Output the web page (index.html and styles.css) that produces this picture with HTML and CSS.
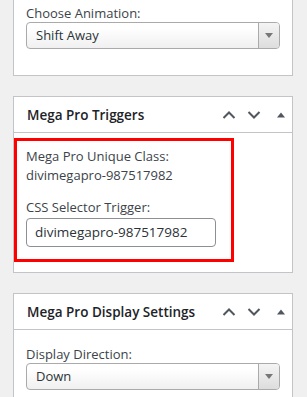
FILE: index.html
```html
<!DOCTYPE html>
<html>
<head>
    <meta charset="utf-8">
    <title>Mega Pro</title>
    <link rel="stylesheet" href="styles.css">
</head>
<body>
    <div class="sidebar">
        <div class="postbox cut">
            <div class="inside">
                <label class="field-label">Choose Animation:</label>
                <div class="select">
                    <span class="select-text">Shift Away</span>
                    <span class="select-arrow"><i></i></span>
                </div>
            </div>
        </div>

        <div class="postbox">
            <div class="postbox-header">
                <h2>Mega Pro Triggers</h2>
                <div class="handle-actions">
                    <svg width="14" height="10" viewBox="0 0 14 10"><path d="M1.5 8 L7 2.5 L12.5 8" fill="none" stroke="#50575e" stroke-width="2"/></svg>
                    <svg width="14" height="10" viewBox="0 0 14 10"><path d="M1.5 2 L7 7.5 L12.5 2" fill="none" stroke="#50575e" stroke-width="2"/></svg>
                    <svg class="toggle" width="10" height="10" viewBox="0 0 10 10"><path d="M1 7.5 L5 2.5 L9 7.5 Z" fill="#50575e"/></svg>
                </div>
            </div>
            <div class="inside-triggers">
                <div class="highlight">
                    <p class="field-label">Mega Pro Unique Class:</p>
                    <p class="field-value">divimegapro-987517982</p>
                    <p class="field-label trigger-label">CSS Selector Trigger:</p>
                    <div class="text-input">divimegapro-987517982</div>
                </div>
            </div>
        </div>

        <div class="postbox">
            <div class="postbox-header">
                <h2>Mega Pro Display Settings</h2>
                <div class="handle-actions">
                    <svg width="14" height="10" viewBox="0 0 14 10"><path d="M1.5 8 L7 2.5 L12.5 8" fill="none" stroke="#50575e" stroke-width="2"/></svg>
                    <svg width="14" height="10" viewBox="0 0 14 10"><path d="M1.5 2 L7 7.5 L12.5 2" fill="none" stroke="#50575e" stroke-width="2"/></svg>
                    <svg class="toggle" width="10" height="10" viewBox="0 0 10 10"><path d="M1 7.5 L5 2.5 L9 7.5 Z" fill="#50575e"/></svg>
                </div>
            </div>
            <div class="inside spaced">
                <label class="field-label">Display Direction:</label>
                <div class="select">
                    <span class="select-text">Down</span>
                    <span class="select-arrow"><i></i></span>
                </div>
            </div>
        </div>
    </div>
</body>
</html>
```

FILE: styles.css
```css
html, body {
    height: 100%;
}
body {
    margin: 0;
    background-color: #f0f0f1;
    font-family: 'Open Sans', 'Noto Sans', sans-serif;
    font-size: 13px;
    color: #3c434a;
    overflow: hidden;
}

.sidebar {
    width: 280px;
    padding-left: 13px;
    display: flex;
    flex-direction: column;
    gap: 20px;
}

.postbox {
    background-color: #ffffff;
    border: 1px solid #c3c4c7;
}
.postbox.cut {
    border-top: none;
}

.inside {
    padding: 4px 12px 26px 12px;
}
.inside.spaced {
    padding-top: 15px;
}

.field-label {
    display: block;
    margin: 0;
    line-height: 18px;
    color: #3c434a;
}

.select {
    display: flex;
    height: 25px;
    border: 1px solid #aaaaaa;
    border-radius: 4px;
    background: linear-gradient(to bottom, #ffffff 20%, #f0f0f0 100%);
    overflow: hidden;
}
.select-text {
    flex: 1;
    padding-left: 9px;
    line-height: 25px;
    font-size: 13px;
    color: #2c3338;
}
.select-arrow {
    width: 20px;
    border-left: 1px solid #aaaaaa;
    background: linear-gradient(to bottom, #f4f4f4 0%, #dddddd 100%);
    display: flex;
    justify-content: center;
    align-items: center;
}
.select-arrow i {
    width: 0;
    height: 0;
    border-left: 4px solid transparent;
    border-right: 4px solid transparent;
    border-top: 5px solid #777777;
}

.postbox-header {
    display: flex;
    align-items: center;
    justify-content: space-between;
    height: 34px;
    padding-top: 1px;
    border-bottom: 1px solid #c3c4c7;
    padding-left: 13px;
}
.postbox-header h2 {
    margin: 0;
    font-size: 13.5px;
    font-weight: 600;
    color: #1d2327;
}
.handle-actions {
    display: flex;
    align-items: center;
    gap: 11px;
    padding-right: 6px;
}
.handle-actions .toggle {
    margin-left: 4px;
}

.inside-triggers {
    padding: 5px 58px 10px 0;
}
.highlight {
    border: 3px solid #ff0000;
    padding: 6px 12px 12px 9px;
}
.highlight p {
    margin: 0;
    line-height: 19px;
}
.highlight .trigger-label {
    margin-top: 13px;
}
.text-input {
    width: 180px;
    height: 27px;
    margin-top: 1px;
    border: 1px solid #8c8f94;
    border-radius: 4px;
    padding-left: 8px;
    line-height: 27px;
    font-size: 13.5px;
    color: #2c3338;
}
```
